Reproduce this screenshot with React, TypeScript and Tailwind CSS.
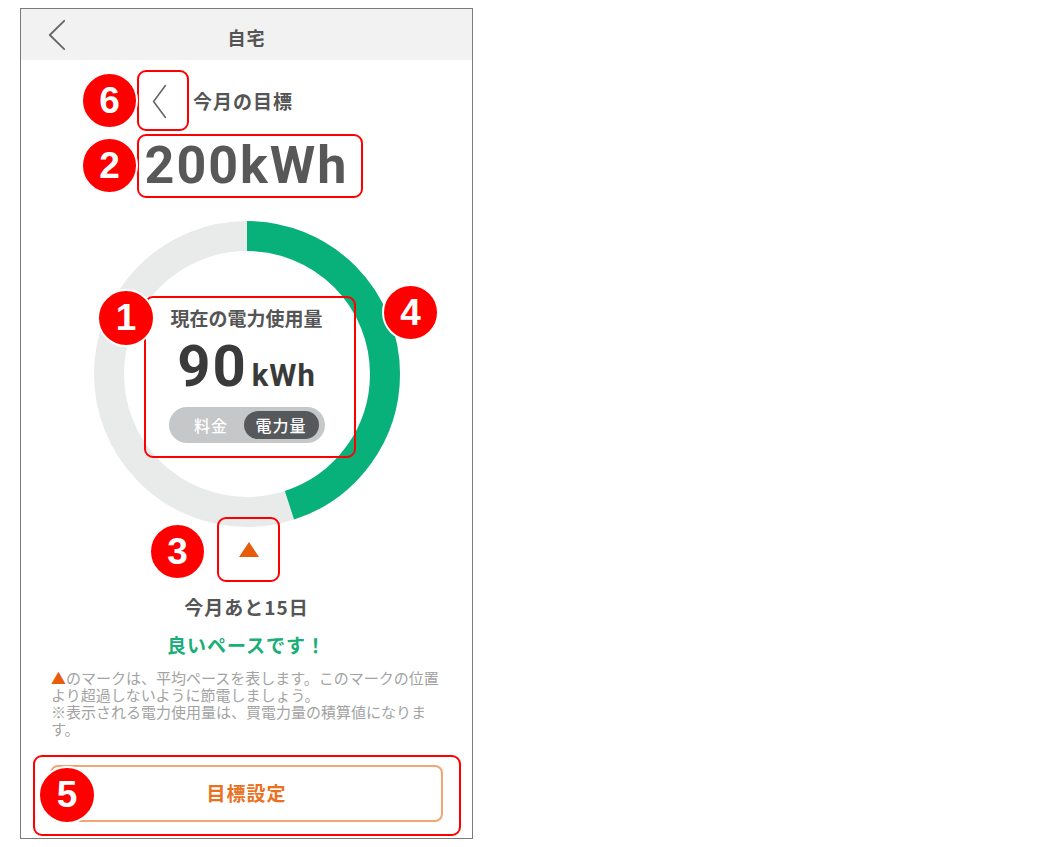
import React from "react";

const R = 138;
const CIRC = 2 * Math.PI * R;
const usage = 90;
const goal = 200;

function Chevron({ className, w, h, sw }: { className?: string; w: number; h: number; sw: number }) {
  return (
    <svg className={className} width={w} height={h} viewBox={`0 0 ${w} ${h}`} fill="none">
      <polyline
        points={`${w - sw},${sw} ${sw},${h / 2} ${w - sw},${h - sw}`}
        stroke="#666"
        strokeWidth={sw}
        strokeLinecap="round"
        strokeLinejoin="round"
      />
    </svg>
  );
}

function Badge({ n, className }: { n: number; className: string }) {
  return (
    <div
      className={`absolute z-20 flex items-center justify-center rounded-full border-2 border-white bg-[#ff0000] font-['Liberation_Sans',Arial,sans-serif] text-[37px] font-bold text-white ${className}`}
    >
      {n}
    </div>
  );
}

function Mark({ className }: { className: string }) {
  return <div className={`absolute z-10 rounded-[9px] border-2 border-[#ff0000] ${className}`} />;
}

export default function App() {
  const pct = usage / goal;
  return (
    <div className="relative h-[847px] w-[1058px] bg-white pl-[20px] pt-[8px] font-['Noto_Sans_CJK_JP',sans-serif]">
      <div className="flex h-[831px] w-[453px] flex-col overflow-hidden border border-[#7a7a7a] bg-white">
        {/* header */}
        <header className="grid h-[51px] shrink-0 grid-cols-[1fr_auto_1fr] items-center bg-[#f2f2f2]">
          <div className="pl-[27px]">
            <Chevron w={18} h={32} sw={1.8} />
          </div>
          <h1 className="pt-[6px] text-[18px] font-bold tracking-[1px] text-[#555]">自宅</h1>
          <div />
        </header>

        {/* goal */}
        <div className="mt-[21px] flex h-[40px] items-center pl-[131px]">
          <Chevron w={15} h={35} sw={1.6} />
          <span className="ml-[26px] text-[19px] font-bold tracking-[1px] text-[#555]">今月の目標</span>
        </div>
        <div className="mt-[15px] text-center font-['Roboto','Noto_Sans_CJK_JP',sans-serif] text-[52px] font-bold leading-[60px] tracking-[2px] text-[#585858]">
          200kWh
        </div>

        {/* ring */}
        <div className="relative mx-auto mt-[25px] h-[306px] w-[306px] shrink-0">
          <svg className="absolute inset-0" width="306" height="306" viewBox="0 0 306 306">
            <circle cx="153" cy="153" r={R} fill="none" stroke="#e9ebea" strokeWidth="30" />
            <circle
              cx="153"
              cy="153"
              r={R}
              fill="none"
              stroke="#08b07a"
              strokeWidth="30"
              strokeDasharray={`${pct * CIRC} ${CIRC}`}
              transform="rotate(-90 153 153)"
            />
          </svg>
          <div className="absolute inset-0 flex flex-col items-center justify-center">
            <div className="text-[19px] font-bold leading-[24px] text-[#555]">現在の電力使用量</div>
            <div className="mt-[7px] flex h-[58px] items-baseline font-['Roboto','Noto_Sans_CJK_JP',sans-serif] font-bold text-[#3a3a3a]">
              <span className="text-[58px] leading-[58px] tracking-[2px]">{usage}</span>
              <span className="ml-[4px] text-[31px] tracking-[1px]">kWh</span>
            </div>
            <div className="mt-[12px] flex h-[36px] w-[156px] items-center rounded-full bg-[#c5c7c9] pl-[4px] pr-[6px]">
              <span className="flex h-[28px] w-[71px] items-center justify-center pl-[6px] text-[16px] font-medium tracking-[1px] text-white">
                料金
              </span>
              <span className="flex h-[28px] w-[75px] items-center justify-center rounded-full bg-[#55595c] text-[16px] font-medium tracking-[1px] text-white">
                電力量
              </span>
            </div>
          </div>
        </div>

        {/* average pace marker */}
        <div className="mt-[15px] flex justify-center pl-[5px]">
          <svg width="20" height="15" viewBox="0 0 20 15">
            <polygon points="10,0 20,15 0,15" fill="#e85b0a" />
          </svg>
        </div>

        <div className="mt-[38px] text-center text-[19px] font-bold leading-[24px] tracking-[1px] text-[#555]">
          今月あと15日
        </div>
        <div className="mt-[14px] text-center text-[19px] font-bold leading-[24px] tracking-[1px] text-[#1aae78]">
          良いペースです！
        </div>

        <p className="ml-[30px] mt-[12px] w-[392px] text-[15px] leading-[17px] text-[#a3a3a3]">
          <span className="text-[#e85b0a]">▲</span>
          のマークは、平均ペースを表します。このマークの位置より超過しないように節電しましょう。
          <br />
          ※表示される電力使用量は、買電力量の積算値になります。
        </p>

        <button className="mx-[29px] mt-[28px] flex h-[57px] shrink-0 items-center justify-center rounded-[8px] border-2 border-[#f3a574] bg-white text-[19px] font-bold tracking-[1px] text-[#e9711f]">
          目標設定
        </button>
      </div>

      {/* annotation overlays */}
      <Mark className="left-[137px] top-[70px] h-[61px] w-[52px]" />
      <Mark className="left-[137px] top-[134px] h-[64px] w-[226px]" />
      <Mark className="left-[144px] top-[296px] h-[162px] w-[212px]" />
      <Mark className="left-[217px] top-[517px] h-[65px] w-[63px]" />
      <Mark className="left-[33px] top-[755px] h-[81px] w-[428px]" />

      <Badge n={6} className="left-[81px] top-[72px] h-[57px] w-[57px]" />
      <Badge n={2} className="left-[81px] top-[137px] h-[57px] w-[57px]" />
      <Badge n={1} className="left-[97px] top-[289px] h-[58px] w-[58px]" />
      <Badge n={4} className="left-[382px] top-[284px] h-[57px] w-[57px]" />
      <Badge n={3} className="left-[149px] top-[523px] h-[57px] w-[57px]" />
      <Badge n={5} className="left-[38px] top-[766px] h-[58px] w-[58px]" />
    </div>
  );
}
